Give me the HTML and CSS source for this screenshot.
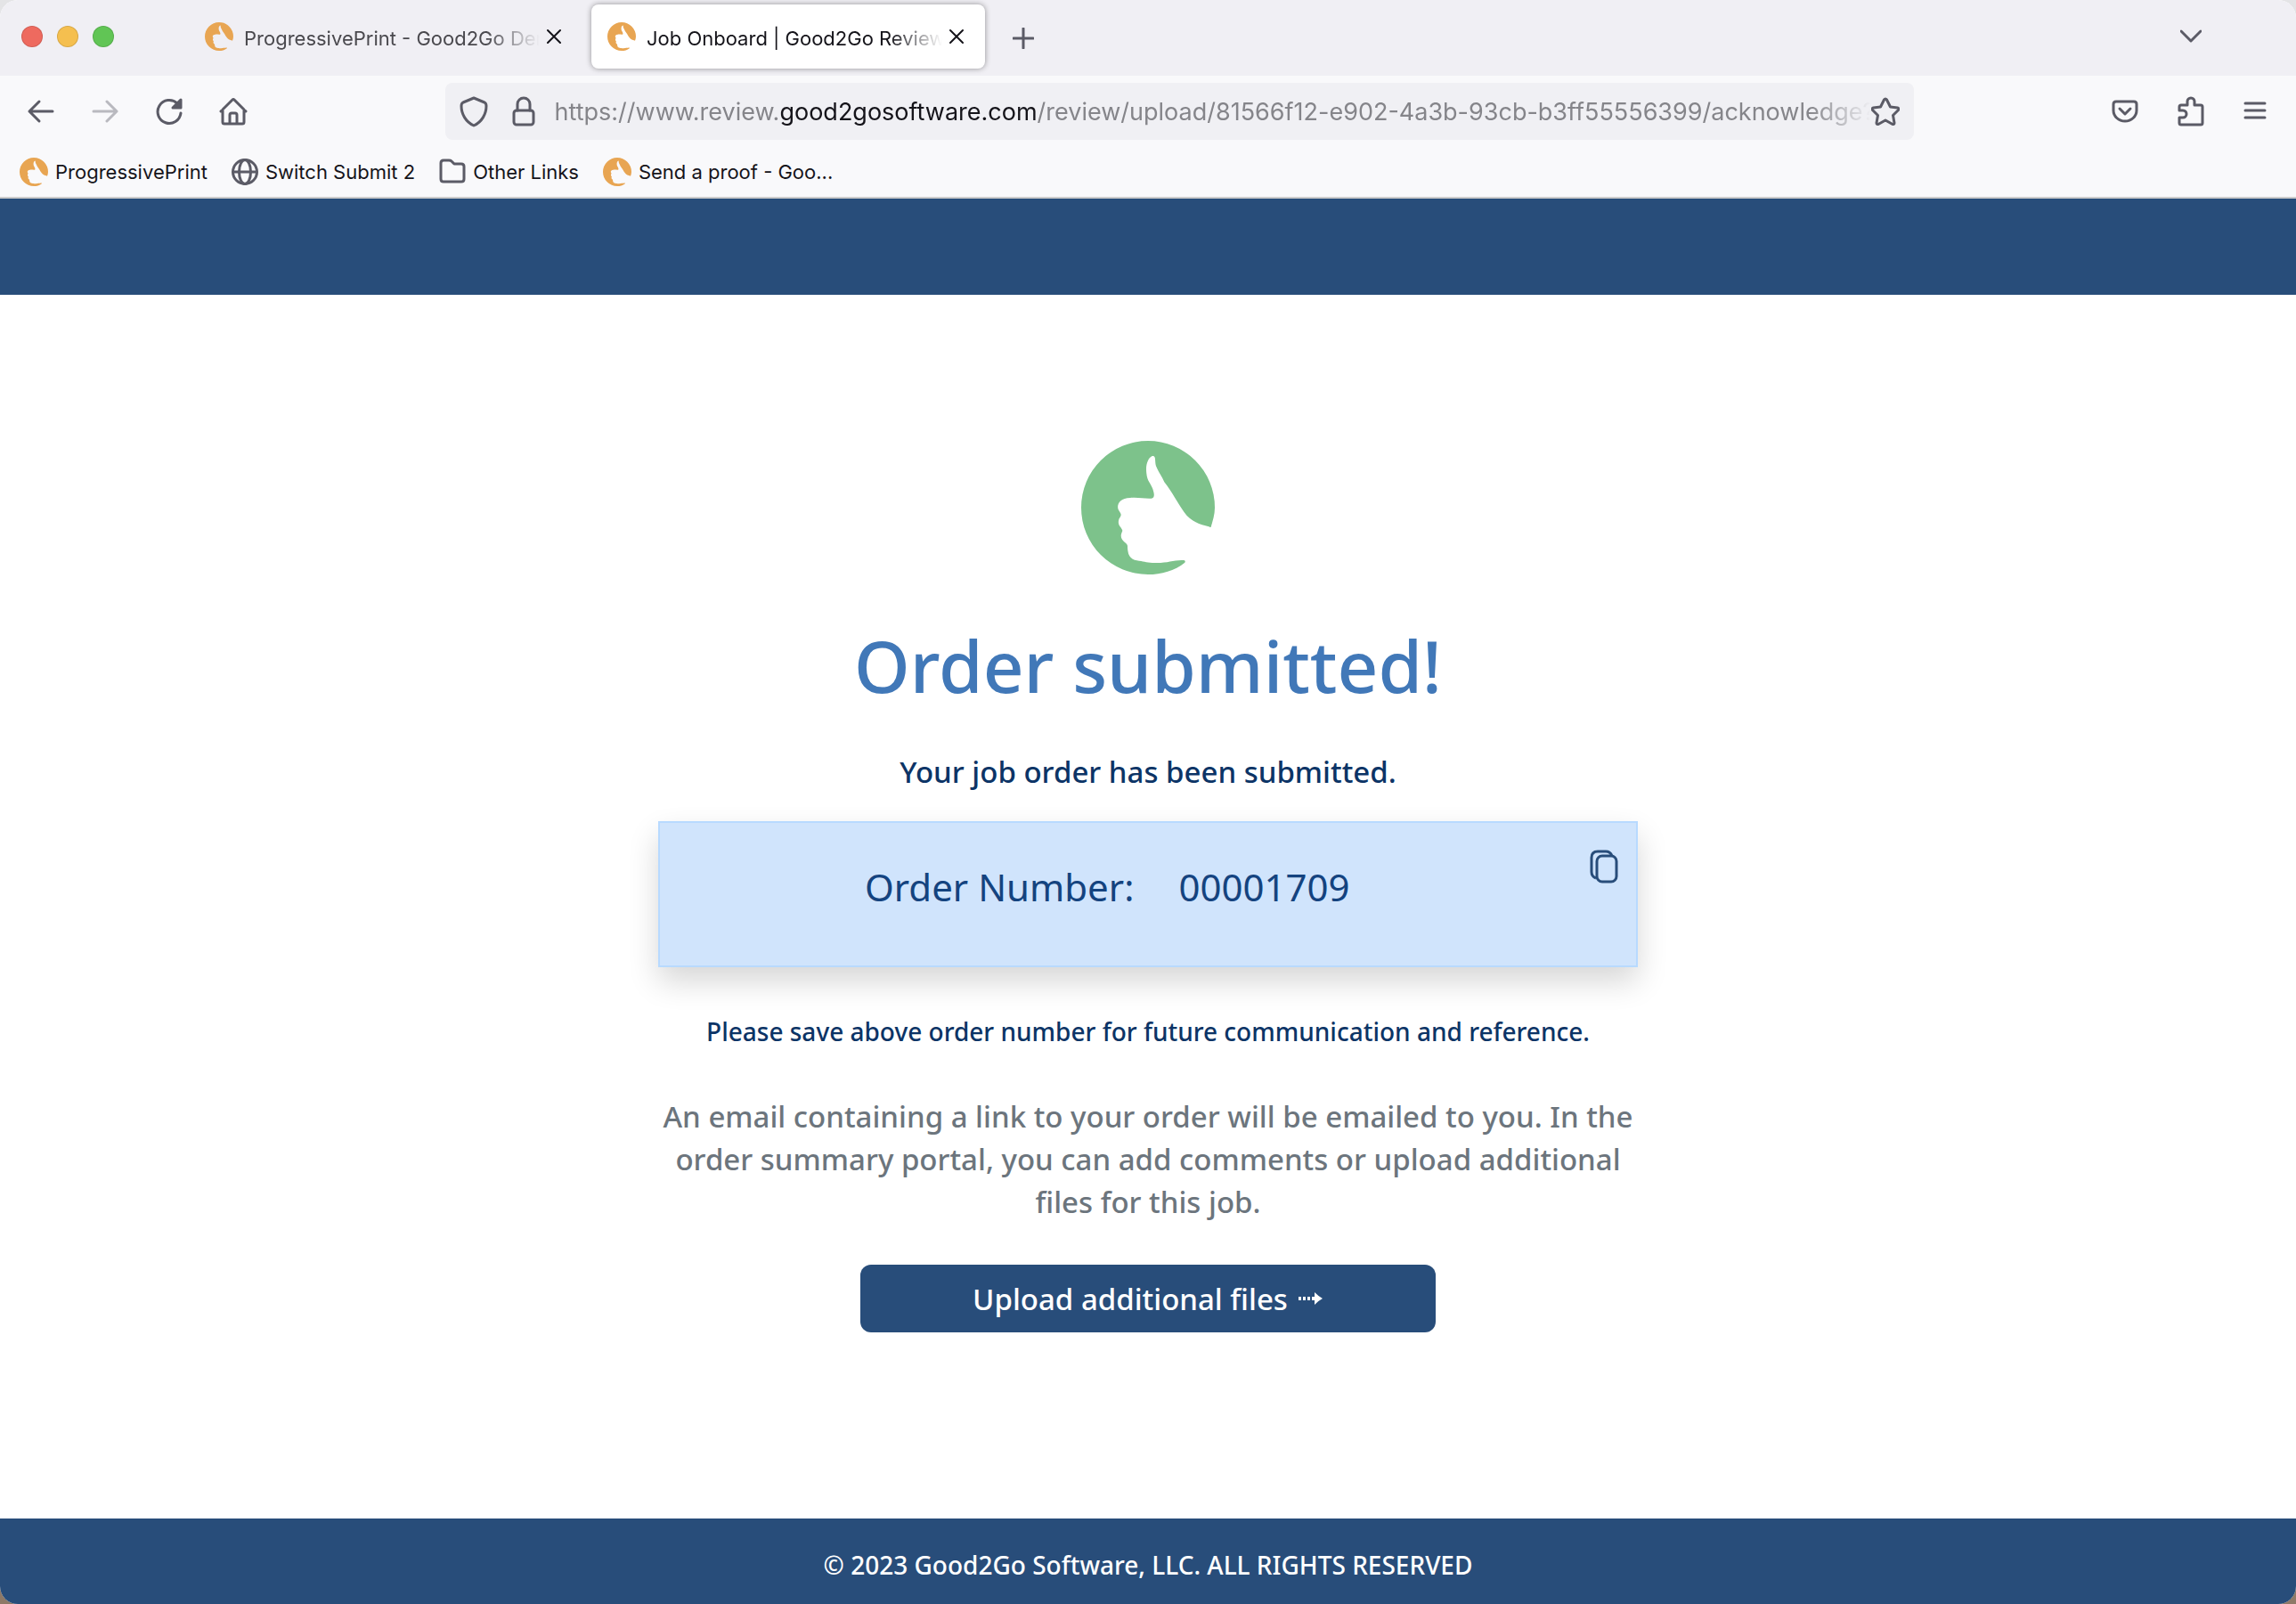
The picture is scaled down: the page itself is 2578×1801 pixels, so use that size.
FILE: index.html
```
<!DOCTYPE html>
<html lang="en">
<head>
    <meta charset="UTF-8">
    <meta name="viewport" content="width=device-width, initial-scale=1.0">
    <title>Job Onboard | Good2Go Review</title>
    <link rel="stylesheet" href="styles.css">
</head>
<body>
    <!-- shared thumb logo -->
    <svg class="defs" aria-hidden="true">
        <symbol id="thumb" viewBox="0 0 450 450">
            <path d="M437 290C443 270 450 248 450 225A225 225 0 1 0 225 450C270 450 315 437 349 410C353 403 347 401 338 402C310 403 290 411 255 411C225 412 215 406 195 404C175 402 160 395 157 370C155 350 159 352 147 342C134 331 130 322 139 303C137 290 119 285 128 262C138 246 134 248 127 235C117 220 127 192 165 192C195 190 210 195 236 194C248 192 247 180 241 162C234 142 222 135 220 110C216 80 225 58 239 51C253 48 247 65 252 85C262 108 272 120 280 139C305 170 325 210 346 239C370 274 400 280 430 289Q435 292 437 290Z"/>
        </symbol>
    </svg>

    <div class="window">
        <div class="tab-bar">
            <div class="lights">
                <span class="light red"></span>
                <span class="light yellow"></span>
                <span class="light green"></span>
            </div>
            <div class="tab">
                <svg class="favicon"><use href="#thumb"/></svg>
                <span class="tab-title">ProgressivePrint - Good2Go Demo</span>
                <button class="icon-btn" aria-label="Close tab"><svg width="16" height="18" viewBox="0 0 16 18"><path d="M1 2l14 14M15 2L1 16"/></svg></button>
            </div>
            <div class="tab active">
                <svg class="favicon"><use href="#thumb"/></svg>
                <span class="tab-title">Job Onboard | Good2Go Review</span>
                <button class="icon-btn" aria-label="Close tab"><svg width="16" height="18" viewBox="0 0 16 18"><path d="M1 2l14 14M15 2L1 16"/></svg></button>
            </div>
            <button class="icon-btn new-tab" aria-label="New tab"><svg width="24" height="24" viewBox="0 0 24 24"><path d="M12 1v22M1 12h22"/></svg></button>
            <button class="icon-btn all-tabs" aria-label="List all tabs"><svg width="24" height="24" viewBox="0 0 24 24"><path d="M1 6l11 11L23 6"/></svg></button>
        </div>

        <div class="nav-bar">
            <div class="nav-group nav-left">
                <button class="icon-btn" aria-label="Back"><svg width="32" height="32" viewBox="0 0 32 32"><path d="M29 16H3M14 5L3 16l11 11"/></svg></button>
                <button class="icon-btn" aria-label="Forward" disabled><svg width="32" height="32" viewBox="0 0 32 32"><path d="M3 16h26M18 5l11 11-11 11"/></svg></button>
                <button class="icon-btn" aria-label="Reload"><svg width="32" height="32" viewBox="0 0 32 32"><path d="M29 18A13 13 0 1 1 25 7l2 2"/><path class="solid" d="M29 3v9h-9z"/></svg></button>
                <button class="icon-btn" aria-label="Home"><svg width="32" height="32" viewBox="0 0 32 32"><path d="M2 16L15 3q1-1 2 0l13 13M4 14v14q0 2 2 2h20q2 0 2-2V14M12 30V20q0-2 2-2h4q2 0 2 2v10"/></svg></button>
            </div>
            <div class="url-bar">
                <button class="icon-btn" aria-label="Tracking protection"><svg width="32" height="36" viewBox="0 0 32 36"><path d="M16 3L28 8q2 1 2 4c0 9-5 18-14 22C7 30 2 21 2 12q0-3 2-4z"/></svg></button>
                <button class="icon-btn" aria-label="Site security"><svg width="32" height="36" viewBox="0 0 32 36"><rect x="5" y="17" width="22" height="16" rx="3"/><path d="M9 17V10a7 7 0 0 1 14 0v7"/></svg></button>
                <span class="url" role="textbox" aria-label="Address" contenteditable="true" spellcheck="false">https://www.review.<b>good2gosoftware.com</b>/review/upload/81566f12-e902-4a3b-93cb-b3ff55556399/acknowledge?</span>
                <button class="icon-btn" aria-label="Bookmark this page"><svg width="32" height="32" viewBox="0 0 32 32"><path d="M14.500 3q1.500-2 3 0l4 8 8 1q2 .5 1 2.500l-6 6 1.500 8.500q0 2-2 1.500l-8-4.500-8 4.500q-2 .5-2-1.500L7.500 20.500l-6-6q-1-2 1-2.500l8-1z"/></svg></button>
            </div>
            <div class="nav-group nav-right">
                <button class="icon-btn" aria-label="Save to Pocket"><svg width="30" height="30" viewBox="0 0 30 30"><path d="M5 4h20q3 0 3 3v7a13 12 0 0 1-26 0V7q0-3 3-3zM9 12l6 6 6-6"/></svg></button>
                <button class="icon-btn" aria-label="Extensions"><svg width="30" height="34" viewBox="0 0 30 34"><path d="M4 10h7V6a4 4 0 0 1 8 0v4h7q2 0 2 2v18q0 2-2 2H4q-2 0-2-2v-6h4a4 4 0 0 0 0-8H2v-4q0-2 2-2z"/></svg></button>
                <button class="icon-btn" aria-label="Menu"><svg width="26" height="26" viewBox="0 0 26 26"><path d="M2 4h22M2 12h22M2 20h22"/></svg></button>
            </div>
        </div>

        <nav class="bookmarks">
            <a href="#"><svg class="favicon"><use href="#thumb"/></svg>ProgressivePrint</a>
            <a href="#"><svg class="line" width="30" height="30" viewBox="0 0 30 30"><circle cx="15" cy="15" r="13.500"/><ellipse cx="15" cy="15" rx="6.500" ry="13.500"/><path d="M2 15h26"/></svg>Switch Submit 2</a>
            <a href="#"><svg class="line" width="30" height="30" viewBox="0 0 30 30"><path d="M5 2h6q2 0 3 1l3 3h8q3 0 3 3v14q0 3-3 3H5q-3 0-3-3V5q0-3 3-3z"/></svg>Other Links</a>
            <a href="#"><svg class="favicon"><use href="#thumb"/></svg>Send a proof - Goo...</a>
        </nav>

        <header class="page-header"></header>

        <main class="content">
            <svg class="logo"><use href="#thumb"/></svg>
            <h1>Order submitted!</h1>
            <p class="lead">Your job order has been submitted.</p>
            <div class="alert">
                <div class="order">
                    <span>Order Number:</span>
                    <span>00001709</span>
                </div>
                <button class="copy" aria-label="Copy order number"><svg width="32" height="38" viewBox="0 0 32 38"><path d="M7 32q-5-2-5-7V9q0-7 7-7h9q5 0 7 5"/><rect x="8" y="7" width="22" height="29" rx="6"/></svg></button>
            </div>
            <p class="note">Please save above order number for future communication and reference.</p>
            <p class="info">An email containing a link to your order will be emailed to you. In the order summary portal, you can add comments or upload additional files for this job.</p>
            <button class="upload">Upload additional files <svg width="28" height="16" viewBox="0 0 28 16"><path d="M0 6h3v4H0zM5 6h3v4H5zM10 6h3v4h-3zM15 6h3V1q5 5 9 7-4 2-9 7v-5h-3z"/></svg></button>
        </main>

        <footer class="page-footer">© 2023 Good2Go Software, LLC. ALL RIGHTS RESERVED</footer>
    </div>
</body>
</html>
```
FILE: styles.css
```
* {
    box-sizing: border-box;
}
body {
    margin: 0;
    background: linear-gradient(#e4e4e6 50%, #8e7967 50%);
    font-family: "Noto Sans", sans-serif;
}
button {
    border: none;
    padding: 0;
    background: none;
    font-family: inherit;
    cursor: pointer;
}
svg {
    display: block;
    flex-shrink: 0;
}
.defs {
    position: absolute;
    width: 0;
    height: 0;
}
.window {
    display: flex;
    flex-direction: column;
    min-height: 100vh;
    border-radius: 20px;
    overflow: hidden;
    background-color: white;
}

/* browser chrome */
.tab-bar, .nav-bar, .bookmarks {
    display: flex;
    align-items: center;
    font-family: Inter, sans-serif;
    font-size: 22px;
    color: #15141a;
}
.tab-bar {
    height: 85px;
    padding: 0 106px 3px 24px;
    background-color: #f0eff4;
}
.lights {
    display: flex;
    gap: 16px;
    margin-right: 84px;
}
.light {
    width: 24px;
    height: 24px;
    border-radius: 50%;
    border: 1px solid rgba(0, 0, 0, 0.12);
}
.red {
    background-color: #ee6a5f;
}
.yellow {
    background-color: #f5bf4f;
}
.green {
    background-color: #61c555;
}
.tab {
    display: flex;
    align-items: center;
    width: 442px;
    height: 72px;
    padding: 0 24px 0 18px;
    border-radius: 8px;
    color: #4a494e;
}
.tab.active {
    margin-left: 10px;
    background-color: white;
    color: #15141a;
    box-shadow: 0 0 6px rgba(0, 0, 0, 0.4);
}
.favicon {
    width: 32px;
    height: 32px;
    fill: #e8a552;
}
.tab-title {
    flex: 1;
    margin: 0 8px 0 12px;
    padding-top: 3px;
    overflow: hidden;
    white-space: nowrap;
    mask-image: linear-gradient(to left, transparent, black 60px);
}
.icon-btn svg, .line {
    fill: none;
    stroke: #5b5b66;
    stroke-width: 3;
    stroke-linecap: round;
    stroke-linejoin: round;
}
.icon-btn .solid {
    fill: #5b5b66;
}
.icon-btn:disabled {
    opacity: 0.4;
}
.tab .icon-btn svg {
    stroke: #15141a;
    stroke-width: 2;
}
.new-tab {
    margin-left: 31px;
    padding-top: 3px;
}
.all-tabs {
    margin-left: auto;
}
.nav-bar {
    height: 80px;
    background-color: #f9f9fb;
}
.nav-group {
    display: flex;
    align-items: center;
}
.nav-left {
    gap: 40px;
    padding-left: 30px;
}
.nav-right {
    gap: 44px;
    padding-right: 33px;
}
.url-bar {
    display: flex;
    align-items: center;
    width: 64%;
    height: 64px;
    margin: 0 auto;
    padding: 0 16px;
    border-radius: 8px;
    background-color: #f0f0f4;
}
.url-bar .icon-btn + .icon-btn {
    margin: 0 19px 0 24px;
}
.url {
    flex: 1;
    overflow: hidden;
    white-space: nowrap;
    font-size: 27px;
    color: #85858a;
    mask-image: linear-gradient(to left, transparent, black 70px);
}
.url b {
    font-weight: normal;
    color: #15141a;
}
.bookmarks {
    gap: 27px;
    height: 58px;
    padding: 0 22px;
    background-color: #f9f9fb;
    border-bottom: 2px solid #cccccc;
}
.bookmarks a {
    display: flex;
    align-items: center;
    gap: 8px;
    color: inherit;
    text-decoration: none;
}

/* page */
.page-header {
    height: 108px;
    background-color: #284d7a;
}
.content {
    display: flex;
    flex: 1;
    flex-direction: column;
    align-items: center;
    width: 100%;
    max-width: 1100px;
    margin: 0 auto;
    padding: 164px 0 80px;
    text-align: center;
    color: #0c3466;
}
.logo {
    width: 150px;
    height: 150px;
    fill: #7dc28b;
}
h1 {
    margin: 54px 0 0;
    font-size: 80px;
    font-weight: 500;
    line-height: 96px;
    color: #4178b8;
}
p {
    margin: 0;
    font-weight: 500;
}
.lead {
    margin-top: 48px;
    font-size: 33px;
    line-height: 48px;
}
.alert {
    display: grid;
    grid-template-columns: 11fr 1fr;
    width: 100%;
    margin-top: 31px;
    padding: 30px 0 58px;
    background-color: #d0e4fc;
    border: 2px solid #b8daff;
    box-shadow: 0 16px 32px rgba(0, 0, 0, 0.16);
    color: #14437f;
}
.order {
    display: flex;
    justify-content: center;
    gap: 50px;
    margin-top: 12px;
    font-size: 42px;
    line-height: 60px;
}
.copy {
    justify-self: end;
    align-self: start;
    margin-right: 20px;
}
.copy svg {
    fill: none;
    stroke: #284d7a;
    stroke-width: 3;
}
.note {
    margin-top: 48px;
    font-size: 28px;
    line-height: 48px;
}
.info {
    margin-top: 48px;
    font-size: 33px;
    line-height: 48px;
    color: #6c757d;
}
.upload {
    display: flex;
    align-items: center;
    justify-content: center;
    gap: 12px;
    width: 646px;
    height: 76px;
    margin-top: 46px;
    border-radius: 12px;
    background-color: #284d7a;
    color: white;
    font-size: 33px;
    font-weight: 500;
}
.upload svg {
    fill: white;
}
.page-footer {
    padding: 32px 0 24px;
    background-color: #284d7a;
    color: white;
    font-size: 28px;
    font-weight: 500;
    line-height: 40px;
    text-align: center;
}
```
